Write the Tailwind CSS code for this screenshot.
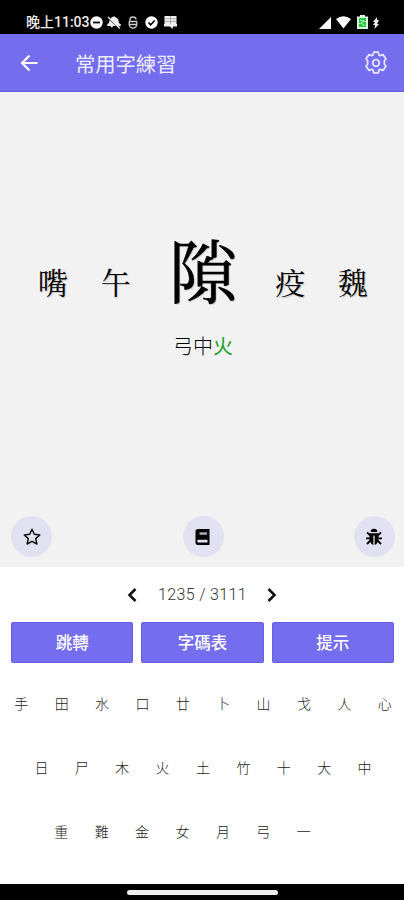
<!DOCTYPE html>
<html lang="zh-Hant">
<head>
<meta charset="utf-8">
<title>常用字練習</title>
<script src="https://cdn.jsdelivr.net/npm/@tailwindcss/browser@4"></script>
</head>
<body class="w-[404px] h-[900px] overflow-hidden bg-white flex flex-col font-[Roboto,'Noto_Sans_CJK_TC',sans-serif] text-black">
<div class="h-[34px] shrink-0 bg-black text-[#eee] flex items-start pt-[14px] pl-[26px] pr-[25px]">
  <span class="text-[14px] leading-[17px] w-[64px] whitespace-nowrap font-medium">晚上11:03</span>
  <svg class="w-[13px] h-[13px] mt-[2px]" viewBox="0 0 13 13"><circle cx="6.5" cy="6.5" r="6.2" fill="#fff"/><path d="M3 6.5h7" stroke="#000" stroke-width="1.8"/></svg>
  <svg class="w-[14px] h-[13px] mt-[2px] ml-[4px]" viewBox="0 0 14 13"><path d="M4.500 1.500 7 .3 9 1.500l2 1.500 1 4 2 1.500-.5 1.500-3 .5L3.500 3zM2.500 4 9 10H6L5 12 3.500 10H0l.5-2L2 7z" fill="#eee"/><path d="m1 1 12 11.500" stroke="#eee" stroke-width="1.300"/></svg>
  <svg class="w-[10px] h-[13px] mt-[2px] ml-[7px]" viewBox="0 0 10 13" fill="none" stroke="#ccc" stroke-width="1.300"><path d="M2 5V3.500a3 2.500 0 0 1 6 0M1 5.500h8M1 8.500h8M1.200 5.500v3a3.800 3.500 0 0 0 7.600 0v-3"/></svg>
  <svg class="w-[13px] h-[13px] mt-[2px] ml-[7px]" viewBox="0 0 13 13"><circle cx="6.5" cy="6.5" r="6.200" fill="#fff"/><path d="m3.500 6.500 2.200 2.300 4-4.300" fill="none" stroke="#000" stroke-width="1.600"/></svg>
  <svg class="w-[13px] h-[14px] mt-[2px] ml-[6px]" viewBox="0 0 13 14"><path d="M.5 0h12v8h.5v2.500H9L8.500 13 6 10.500H0V8h.5z" fill="#eee"/><path d="M6.500 0v8M1 2.800h11M1 5.500h11" stroke="#888" stroke-width=".6"/></svg>
  <div class="flex-1"></div>
  <svg class="w-[12px] h-[12px] mt-[3px]" viewBox="0 0 12 12"><path d="M12 0v12H0z" fill="#fff"/></svg>
  <svg class="w-[15px] h-[13px] mt-[2px] ml-[5px]" viewBox="0 0 15 13"><path d="M0 3Q7.500-2.500 15 3L7.500 12.500z" fill="#fff"/></svg>
  <svg class="w-[11px] h-[14px] mt-[1px] ml-[6px]" viewBox="0 0 11 14"><path d="M3 0h5v1.500h3V14H0V1.500h3z" fill="#d9f5df"/><path d="M2 3h7v3L6.500 7H9v5H2V9l2.500-1H2z" fill="#27c43e"/><path d="m3 5 4 1-3 2 4 3" stroke="#eafbed" fill="none" stroke-width=".8"/></svg>
  <svg class="w-[6px] h-[12px] mt-[3px] ml-[5px]" viewBox="0 0 6 12"><path d="M4 0 0 5h2L0 8h2l-.5 4L6 7H4l2-4H4z" fill="#eee"/></svg>
</div>
<header class="h-[58px] shrink-0 bg-[#746dee] border-b border-[#655eda] flex items-center pl-[20px] pr-[16px]">
  <svg class="w-[19px] h-[18px]" viewBox="0 0 19 18" fill="none" stroke="#fff" stroke-width="2.200"><path d="M17.500 9H2.500M9.500 1.500 2 9l7.500 7.500"/></svg>
  <h1 class="ml-[36px] text-[20.3px] leading-[24px] text-[#eeedff] flex-1 font-normal mt-[5px]">常用字練習</h1>
  <svg class="w-[24px] h-[24px]" viewBox="0 0 24 24" fill="none" stroke="#e6e4ff" stroke-width="1.800" stroke-linejoin="round"><path d="M9.700 1.200h4.600l.6 2.700 1.500.7 2.600-1 3 4.100-1.600 2v3.600l1.600 2-3 4.100-2.600-1-1.500.7-.6 2.700H9.700l-.6-2.700-1.500-.7-2.600 1-3-4.100 1.600-2V9.700l-1.600-2 3-4.100 2.600 1 1.500-.7z"/><circle cx="12" cy="12" r="3.300"/></svg>
</header>
<main class="h-[475px] shrink-0 bg-[#f2f2f2] flex flex-col">
  <div class="mt-[131px] h-[90px] flex items-center justify-between pl-[38px] pr-[36px] font-['Noto_Serif_CJK_TC','AR_PL_UMing_TW','Noto_Sans_CJK_TC',serif] text-[30px] leading-none [text-shadow:1px_1px_1px_#0003]">
    <span class="pt-[25px]">嘴</span><span class="pt-[25px]">午</span>
    <span class="text-[69px] mx-[5px] [-webkit-text-stroke:0.6px_#000]">隙</span>
    <span class="pt-[25px]">疫</span><span class="pt-[25px]">魏</span>
  </div>
  <p class="mt-[22px] text-center text-[20px] leading-[24px] font-light pl-[2px]">弓中<span class="text-[#22a12f] font-normal">火</span></p>
  <div class="flex justify-between mt-auto mb-[10px] pl-[11px] pr-[9px]">
    <div class="size-[41px] rounded-full bg-[#e2e1f1] flex items-center justify-center"><svg class="w-[18px] h-[18px]" viewBox="0 0 18 18"><path d="m9 1.300 2.300 5 5.500.6-4.100 3.700 1.200 5.400L9 13.300 4.100 16l1.200-5.400L1.200 6.900l5.500-.6z" fill="none" stroke="#111" stroke-width="1.500" stroke-linejoin="round"/></svg></div>
    <div class="size-[41px] rounded-full bg-[#e2e1f1] flex items-center justify-center"><svg class="w-[16px] h-[18px]" viewBox="0 0 16 18"><path d="M3 1h11.500v16H3a2.500 2.500 0 0 1-2.500-2.500v-11A2.500 2.500 0 0 1 3 1z" fill="#000"/><path d="M4.500 4.300h7.500v2.500H4.500z" fill="#aaa9b5"/><path d="M3.500 11.800h9v2.700h-9a1.300 1.300 0 0 1 0-2.700z" fill="#e2e1f1"/></svg></div>
    <div class="size-[41px] rounded-full bg-[#e2e1f1] flex items-center justify-center"><svg class="w-[18px] h-[18px] -translate-x-px" viewBox="0 0 18 18"><path d="M5.700 4a3.300 3.300 0 0 1 6.600 0z"/><path d="M4.500 5.300h9V13L11 16.500H7L4.500 13z"/><path d="M5.500 7.500 2 4.500M12.500 7.500l3.500-3M5 10.300H1M13 10.300h4M5.500 12.500 2 16M12.500 12.500l3.500 3.500" stroke="#000" stroke-width="1.800" fill="none"/><path d="M9 7.500v9" stroke="#e2e1f1" stroke-width="1.300"/></svg></div>
  </div>
</main>
<div class="h-[55px] shrink-0 flex items-center justify-center">
  <svg class="w-[10px] h-[14px]" viewBox="0 0 10 14" fill="none" stroke="#111" stroke-width="2.600"><path d="M8.500 1 2.500 7l6 6"/></svg>
  <span class="w-[130px] text-center text-[16px] tracking-[0.35px] text-[#333] font-light pl-px">1235 / 3111</span>
  <svg class="w-[10px] h-[14px]" viewBox="0 0 10 14" fill="none" stroke="#111" stroke-width="2.600"><path d="m1.500 1 6 6-6 6"/></svg>
</div>
<div class="shrink-0 grid grid-cols-3 gap-[8px] pl-[11px] pr-[10px] text-white text-[16.5px] font-medium *:pt-[4px]">
  <button class="h-[41px] rounded-[2px] bg-[#746dee] border border-[#655ee5]">跳轉</button>
  <button class="h-[41px] rounded-[2px] bg-[#746dee] border border-[#655ee5]">字碼表</button>
  <button class="h-[41px] rounded-[2px] bg-[#746dee] border border-[#655ee5]">提示</button>
</div>
<div class="flex-1 pt-[9px] text-[14px] leading-[64px] text-[#222] font-light text-center flex flex-col items-center">
  <div class="flex h-[64px] *:w-[40.4px] *:shrink-0 pl-[2px]"><span>手</span><span>田</span><span>水</span><span>口</span><span>廿</span><span>卜</span><span>山</span><span>戈</span><span>人</span><span>心</span></div>
  <div class="flex h-[64px] *:w-[40.4px] *:shrink-0 pl-[2px]"><span>日</span><span>尸</span><span>木</span><span>火</span><span>土</span><span>竹</span><span>十</span><span>大</span><span>中</span></div>
  <div class="flex h-[64px] *:w-[40.4px] *:shrink-0 pr-[39px]"><span>重</span><span>難</span><span>金</span><span>女</span><span>月</span><span>弓</span><span>一</span></div>
</div>
<div class="h-[16px] shrink-0 bg-black flex justify-center pt-[6px]"><div class="w-[151px] h-[5px] rounded-full bg-[#eee]"></div></div>
</body>
</html>
